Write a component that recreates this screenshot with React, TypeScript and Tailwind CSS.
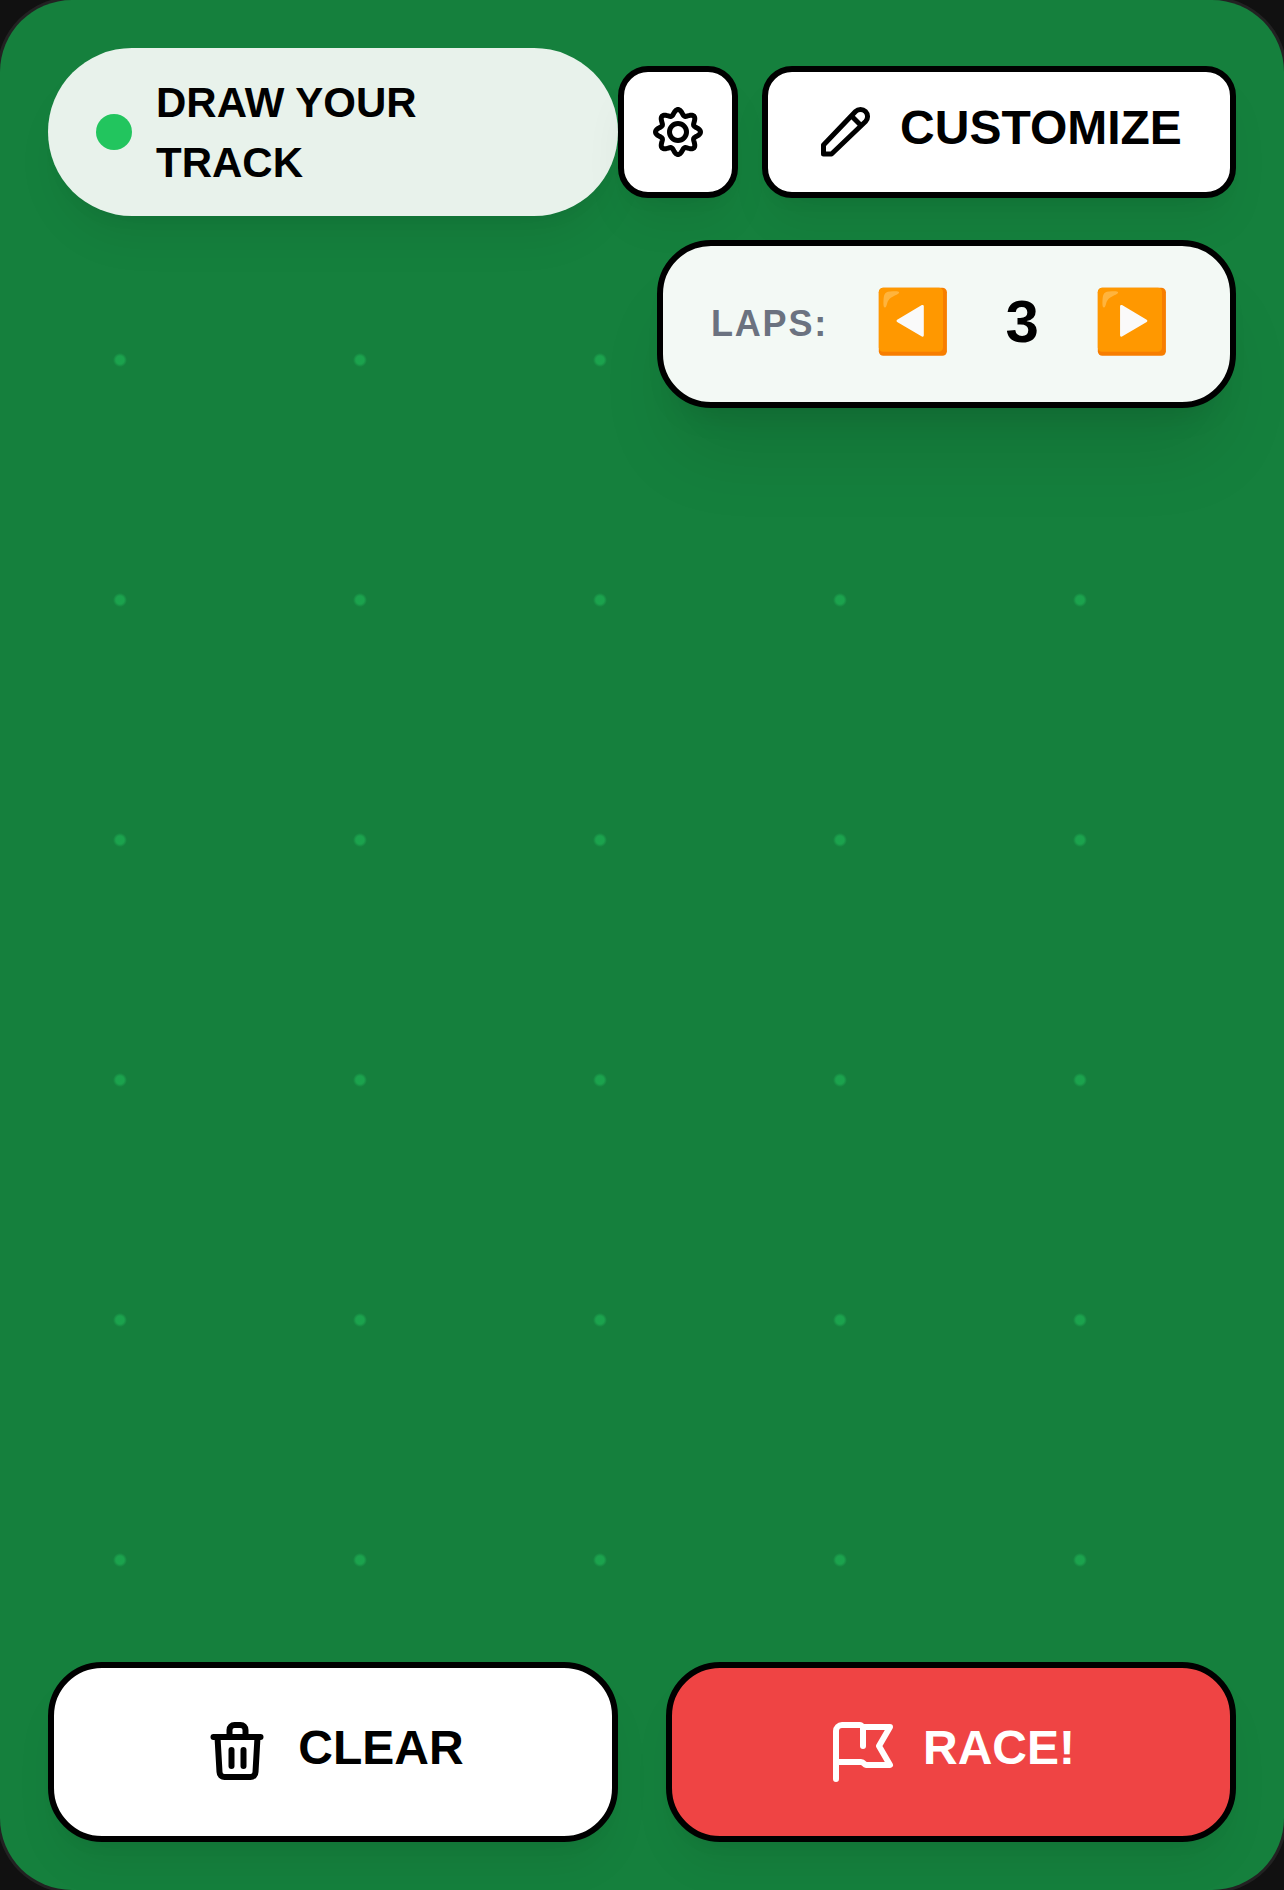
function TrashIcon() {
  return (
    <svg width="72" height="72" viewBox="-8.5 -6 72 72" fill="none" stroke="currentColor" strokeWidth="6" strokeLinecap="round" strokeLinejoin="round">
      <path d="M3 15h47" />
      <path d="M19 15V8a5 5 0 0 1 5-5h6a5 5 0 0 1 5 5v7" />
      <path d="M7 15l2 35a5 5 0 0 0 5 5h26a5 5 0 0 0 5-5l2-35" />
      <path d="M21 28v16" />
      <path d="M33 28v16" />
    </svg>
  );
}

function FlagIcon() {
  return (
    <svg width="72" height="72" viewBox="-6 -6 72 72" fill="none" stroke="currentColor" strokeWidth="6" strokeLinecap="round" strokeLinejoin="round">
      <path d="M3 57V9a6 6 0 0 1 6-6h18c2 0 2 2 4 2h26l-11 19 11 19H33c-2 0-2-3-5-3H3" />
      <path d="M30 5v19" />
    </svg>
  );
}

function PencilIcon() {
  return (
    <svg width="60" height="60" viewBox="0 0 60 60" fill="none" stroke="currentColor" strokeWidth="5" strokeLinejoin="round">
      <path d="M7.5 52V43L39.5 9.5a7 7 0 0 1 10 10L15.5 52Z" />
      <path d="M36.5 15l7.5 7.5" />
    </svg>
  );
}

function gearPath() {
  const points: string[] = [];
  for (let i = 0; i < 128; i++) {
    const t = (i / 128) * Math.PI * 2;
    const r = 19.75 + 2.75 * Math.cos(8 * t);
    points.push(`${(30 + r * Math.cos(t)).toFixed(2)} ${(30 + r * Math.sin(t)).toFixed(2)}`);
  }
  return `M${points.join("L")}Z`;
}

function GearIcon() {
  return (
    <svg width="60" height="60" viewBox="0 0 60 60" fill="none" stroke="currentColor" strokeWidth="5" strokeLinecap="round" strokeLinejoin="round">
      <path d={gearPath()} />
      <circle cx="30" cy="30" r="8.5" />
    </svg>
  );
}

export default function App() {
  return (
    <div className="w-[1284px] h-[1890px] bg-[#111111] overflow-hidden font-['Liberation_Sans',Arial,sans-serif]">
      <div className="w-full h-full rounded-[72px] shadow-[0_0_0_3px_#222222] bg-[#15803d] bg-[radial-gradient(circle,rgba(34,197,94,0.5)_4px,transparent_7px)] bg-[size:240px_240px] p-12 flex flex-col justify-between">
        <div className="flex flex-col gap-6">
          <div className="flex items-center">
            <div className="w-[570px] h-[168px] shrink-0 rounded-full bg-[#e8f2eb] shadow-[0_30px_45px_-9px_rgba(0,0,0,0.07),0_12px_18px_-12px_rgba(0,0,0,0.07)] flex items-center pl-12 gap-6">
              <span className="w-9 h-9 rounded-full bg-[#22c55e] shrink-0" />
              <span className="w-[300px] text-[42px] leading-[60px] font-bold text-black pt-0.5">DRAW YOUR TRACK</span>
            </div>
            <button className="w-[120px] h-[132px] shrink-0 rounded-[30px] border-[6px] border-black bg-white shadow-[0_30px_45px_-9px_rgba(0,0,0,0.07),0_12px_18px_-12px_rgba(0,0,0,0.07)] flex items-center justify-center text-black">
              <GearIcon />
            </button>
            <button className="ml-6 w-[474px] h-[132px] shrink-0 rounded-[30px] border-[6px] border-black bg-white shadow-[0_30px_45px_-9px_rgba(0,0,0,0.07),0_12px_18px_-12px_rgba(0,0,0,0.07)] flex items-center justify-center gap-6 text-black">
              <PencilIcon />
              <span className="text-[48px] leading-[60px] font-bold pb-2">CUSTOMIZE</span>
            </button>
          </div>
          <div className="flex justify-end">
            <div className="w-[579px] h-[168px] rounded-[54px] border-[6px] border-black bg-[#f3f9f5] shadow-[0_60px_75px_-15px_rgba(0,0,0,0.1),0_24px_30px_-18px_rgba(0,0,0,0.1)] flex items-center pl-12 text-black">
              <span className="text-[36px] font-bold tracking-[1.8px] text-[#6b7280]">LAPS:</span>
              <span className="ml-[46px] text-[62px] leading-[72px] pb-1 font-['Noto_Color_Emoji',sans-serif]">◀️</span>
              <span className="w-[142px] text-center text-[60px] leading-[72px] font-bold pb-1">3</span>
              <span className="text-[62px] leading-[72px] pb-1 font-['Noto_Color_Emoji',sans-serif]">▶️</span>
            </div>
          </div>
        </div>
        <div className="flex gap-12">
          <button className="flex-1 h-[180px] rounded-[54px] border-[6px] border-black bg-white shadow-[0_30px_45px_-9px_rgba(0,0,0,0.07),0_12px_18px_-12px_rgba(0,0,0,0.07)] flex items-center justify-center gap-6 text-black">
            <TrashIcon />
            <span className="text-[48px] leading-[60px] font-bold pb-2">CLEAR</span>
          </button>
          <button className="flex-1 h-[180px] rounded-[54px] border-[6px] border-black bg-[#ef4444] shadow-[0_30px_45px_-9px_rgba(0,0,0,0.07),0_12px_18px_-12px_rgba(0,0,0,0.07)] flex items-center justify-center gap-6 text-white">
            <FlagIcon />
            <span className="text-[48px] leading-[60px] font-bold pb-2">RACE!</span>
          </button>
        </div>
      </div>
    </div>
  );
}
